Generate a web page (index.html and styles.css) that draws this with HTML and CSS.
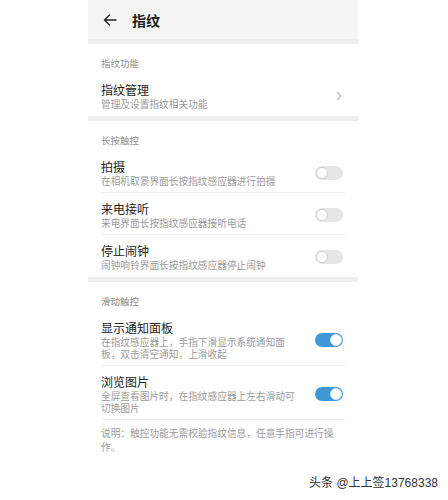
FILE: index.html
```html
<!DOCTYPE html>
<html lang="zh">
<head>
<meta charset="utf-8">
<link rel="stylesheet" href="styles.css">
</head>
<body>
<div class="panel">
  <div class="header">
    <svg class="back" width="14" height="12" viewBox="0 0 14 12"><path d="M13 6H1.5M6.5 1L1.5 6l5 5" fill="none" stroke="#222" stroke-width="1.4" stroke-linecap="round" stroke-linejoin="round"/></svg>
    <span class="htitle">指纹</span>
  </div>
  <div class="band"></div>
  <div class="section">
    <div class="label">指纹功能</div>
    <div class="item last">
      <div class="text">
        <div class="title">指纹管理</div>
        <div class="sub">管理及设置指纹相关功能</div>
      </div>
      <svg class="chev" width="6" height="10" viewBox="0 0 6 10"><path d="M1 1l4 4-4 4" fill="none" stroke="#b5b5b5" stroke-width="1.1"/></svg>
    </div>
  </div>
  <div class="band"></div>
  <div class="section">
    <div class="label">长按触控</div>
    <div class="item">
      <div class="text">
        <div class="title">拍摄</div>
        <div class="sub">在相机取景界面长按指纹感应器进行拍摄</div>
      </div>
      <span class="toggle"><span class="knob"></span></span>
    </div>
    <div class="item">
      <div class="text">
        <div class="title">来电接听</div>
        <div class="sub">来电界面长按指纹感应器接听电话</div>
      </div>
      <span class="toggle"><span class="knob"></span></span>
    </div>
    <div class="item last">
      <div class="text">
        <div class="title">停止闹钟</div>
        <div class="sub">闹钟响铃界面长按指纹感应器停止闹钟</div>
      </div>
      <span class="toggle"><span class="knob"></span></span>
    </div>
  </div>
  <div class="band"></div>
  <div class="section">
    <div class="label">滑动触控</div>
    <div class="item">
      <div class="text">
        <div class="title">显示通知面板</div>
        <div class="sub">在指纹感应器上，手指下滑显示系统通知面板，双击清空通知，上滑收起</div>
      </div>
      <span class="toggle on"><span class="knob"></span></span>
    </div>
    <div class="item">
      <div class="text">
        <div class="title">浏览图片</div>
        <div class="sub">全屏查看图片时，在指纹感应器上左右滑动可切换图片</div>
      </div>
      <span class="toggle on"><span class="knob"></span></span>
    </div>
    <div class="note">说明：触控功能无需校验指纹信息，任意手指可进行操作。</div>
  </div>
</div>
<div class="footer">头条 @上上签13768338</div>
</body>
</html>
```
FILE: styles.css
```css
* { box-sizing: border-box; }
html, body { margin: 0; padding: 0; background: #fff; }
body {
  width: 448px;
  height: 500px;
  font-family: "Noto Sans CJK SC", "Noto Sans", sans-serif;
  overflow: hidden;
}
.panel {
  margin-left: 88px;
  width: 270px;
  height: 468px;
  background: #fff;
}
.header {
  height: 39px;
  background: #f5f5f5;
  display: flex;
  align-items: center;
  padding-left: 15px;
}
.back { display: block; }
.htitle {
  margin-left: 15px;
  font-size: 14px;
  font-weight: 700;
  color: #1e1e1e;
  line-height: 16px;
}
.band {
  height: 5px;
  background: #eeeeee;
}
.section {
  padding: 0 13px 0 13px;
}
.label {
  padding: 12px 0 4px;
  font-size: 9.5px;
  line-height: 14px;
  color: #8c8c8c;
}
.item {
  display: flex;
  align-items: center;
  padding: 8px 2px 5px 0;
  border-bottom: 1px solid #efefef;
}
.item.last {
  border-bottom: none;
  padding-bottom: 6px;
}
.text { flex: 1; min-width: 0; padding-right: 18px; }
.title {
  font-size: 12px;
  line-height: 16px;
  color: #222;
}
.sub {
  font-size: 9.7px;
  line-height: 12px;
  color: #9b9b9b;
}
.chev { display: block; margin-right: 1px; }
.toggle {
  position: relative;
  flex: none;
  width: 28px;
  height: 14px;
  border-radius: 7px;
  background: #e6e6e6;
}
.knob {
  position: absolute;
  top: 1px;
  left: 1px;
  width: 12px;
  height: 12px;
  border-radius: 50%;
  background: #fff;
  border: 1px solid #cfcfcf;
}
.toggle.on { background: #3f98d5; }
.toggle.on .knob {
  left: 15px;
  border-color: #d8e6f0;
}
.note {
  padding: 6px 2px 0 0;
  font-size: 9.7px;
  line-height: 14px;
  color: #9b9b9b;
}
.footer {
  display: flex;
  justify-content: flex-end;
  padding-right: 10px;
  padding-top: 7px;
  font-family: "Liberation Sans", "Noto Sans CJK SC", sans-serif;
  font-size: 12px;
  line-height: 16px;
  color: #333;
}
```
